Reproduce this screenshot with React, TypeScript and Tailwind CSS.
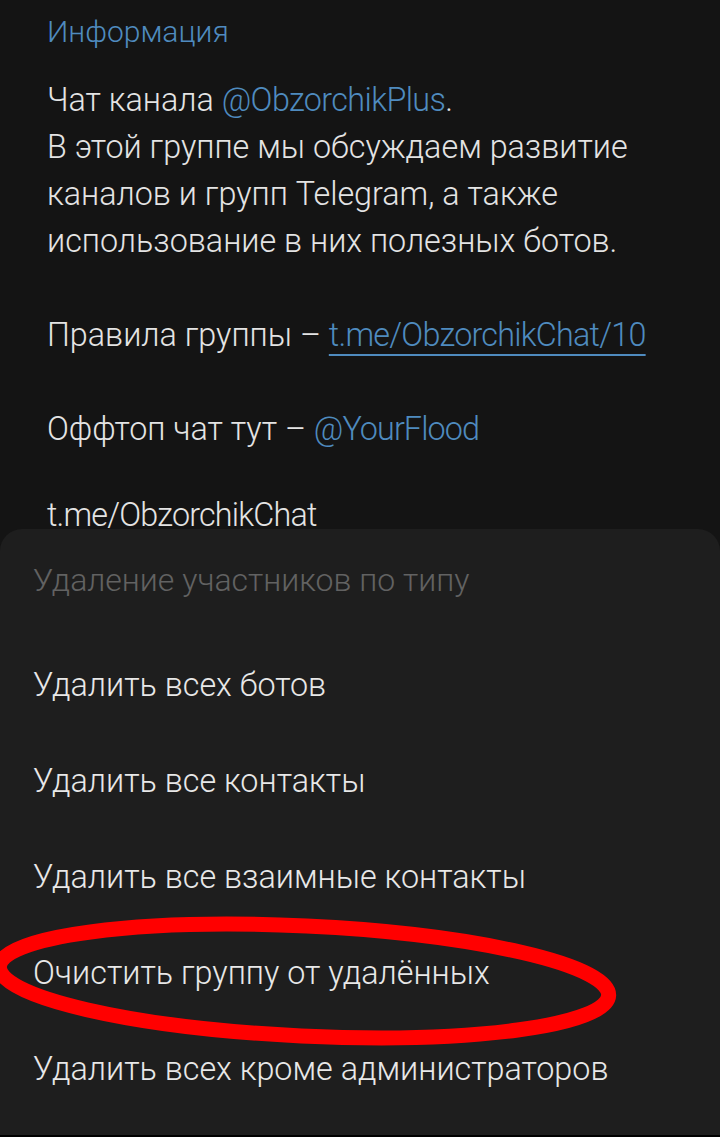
import React from "react";

const font = { fontFamily: 'Roboto, "Noto Sans", sans-serif' };

export default function App() {
  const items = [
    "Удалить всех ботов",
    "Удалить все контакты",
    "Удалить все взаимные контакты",
    "Очистить группу от удалённых",
    "Удалить всех кроме администраторов",
  ];
  return (
    <div className="relative w-[720px] h-[1137px] overflow-hidden bg-[#141414] flex flex-col" style={font}>
      <div className="h-[529px] shrink-0 pl-[47px] pt-[14px]">
        <div className="text-[30px] leading-[36px] text-[#4f8bbf] font-light">Информация</div>
        <div className="mt-[27px] text-[32.3px] leading-[47px] text-[#e4e4e4] font-light">
          <div>
            Чат канала <span className="text-[#4f8bbf] tracking-[-0.6px]">@ObzorchikPlus</span>.
          </div>
          <div>В этой группе мы обсуждаем развитие</div>
          <div>каналов и групп Telegram, а также</div>
          <div>использование в них полезных ботов.</div>
          <div className="h-[47px]" />
          <div>
            Правила группы –{" "}
            <span className="text-[#4f8bbf] tracking-[-0.75px] underline decoration-[2px] underline-offset-[8px]">t.me/ObzorchikChat/10</span>
          </div>
          <div className="h-[47px]" />
          <div>
            Оффтоп чат тут – <span className="text-[#4f8bbf] tracking-[-0.9px]">@YourFlood</span>
          </div>
          <div className="mt-[42px] leading-[40px] tracking-[-0.8px]">t.me/ObzorchikChat</div>
        </div>
      </div>
      <div className="flex-1 bg-[#1e1e1e] rounded-t-[22px] flex flex-col">
        <div className="h-[102px] flex items-center pl-[33px] text-[32px] text-[#626262] font-light">
          Удаление участников по типу
        </div>
        <div className="mt-[6px] flex flex-col">
          {items.map((t) => (
            <div key={t} className="h-[96px] flex items-center pl-[33px] text-[32.3px] text-[#e8e8e8] font-light">
              {t}
            </div>
          ))}
        </div>
      </div>
      <div className="h-[2px] bg-black shrink-0" />
      <svg className="absolute left-0 top-0 pointer-events-none" width="720" height="1137">
        <ellipse cx="304" cy="981" rx="305" ry="55" fill="none" stroke="#ff0000" strokeWidth="15" transform="rotate(2.7 304 981)" />
      </svg>
    </div>
  );
}
